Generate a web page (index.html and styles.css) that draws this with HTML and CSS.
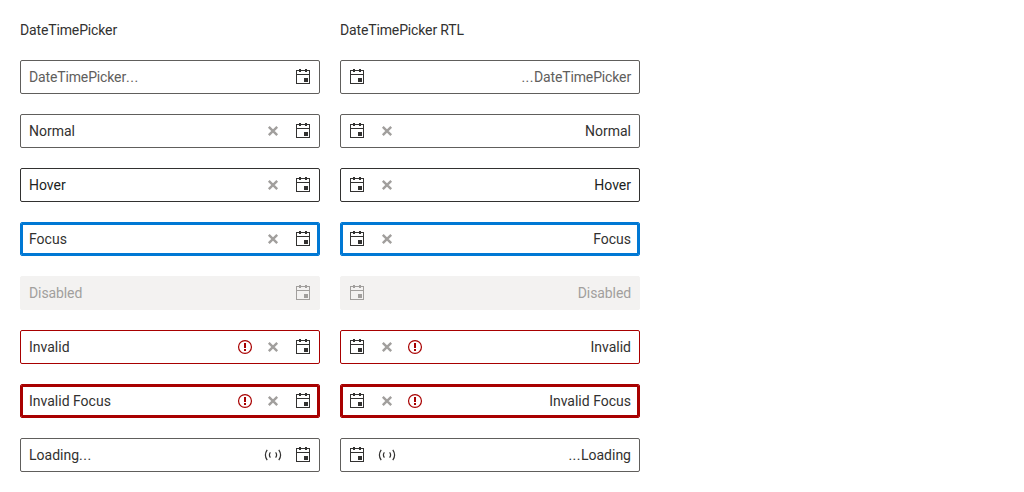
FILE: index.html
```
<!DOCTYPE html>
<html lang="en">
<head>
<meta charset="utf-8">
<title>DateTimePicker</title>
<link rel="stylesheet" href="styles.css">
</head>
<body>
<svg class="sprite" aria-hidden="true">
  <symbol id="calendar" viewBox="0 0 16 16"><path fill="currentColor" fill-rule="evenodd" d="M4 0h2v1h4V0h2v1h3v14H1V1h3zM2 2v3h12V2h-2v1h-2V2H6v1H4V2zM2 6v8h12V6zM9 9h4v4H9z"/></symbol>
  <symbol id="clear" viewBox="0 0 16 16"><path fill="none" stroke="currentColor" stroke-width="2.4" d="M3.8 3.8l8.4 8.4M12.2 3.8l-8.4 8.4"/></symbol>
  <symbol id="error" viewBox="0 0 16 16"><circle cx="8" cy="8" r="6.45" fill="none" stroke="currentColor" stroke-width="1.2"/><path fill="currentColor" d="M7 4h2v5H7zM7 10h2v2H7z"/></symbol>
  <symbol id="loading" viewBox="0 0 18 16"><path fill="none" stroke="currentColor" stroke-width="1.2" d="M3.2 2.8Q-.4 8 3.2 13.2M14.8 2.8q3.6 5.2 0 10.4M6.4 5.4q-2 2.6 0 5.2M11.6 5.4q2 2.6 0 5.2"/></symbol>
</svg>
<main class="columns">
  <section class="column">
    <h2 class="title">DateTimePicker</h2>
    <div class="picker placeholder"><span class="value">DateTimePicker<span class="dots">...</span></span><svg class="icon calendar"><use href="#calendar"/></svg></div>
    <div class="picker"><span class="value">Normal</span><svg class="icon clear"><use href="#clear"/></svg><svg class="icon calendar"><use href="#calendar"/></svg></div>
    <div class="picker hover"><span class="value">Hover</span><svg class="icon clear"><use href="#clear"/></svg><svg class="icon calendar"><use href="#calendar"/></svg></div>
    <div class="picker focus"><span class="value">Focus</span><svg class="icon clear"><use href="#clear"/></svg><svg class="icon calendar"><use href="#calendar"/></svg></div>
    <div class="picker disabled"><span class="value">Disabled</span><svg class="icon calendar"><use href="#calendar"/></svg></div>
    <div class="picker invalid"><span class="value">Invalid</span><svg class="icon error"><use href="#error"/></svg><svg class="icon clear"><use href="#clear"/></svg><svg class="icon calendar"><use href="#calendar"/></svg></div>
    <div class="picker invalid focus"><span class="value">Invalid Focus</span><svg class="icon error"><use href="#error"/></svg><svg class="icon clear"><use href="#clear"/></svg><svg class="icon calendar"><use href="#calendar"/></svg></div>
    <div class="picker"><span class="value">Loading<span class="dots">...</span></span><svg class="icon loading"><use href="#loading"/></svg><svg class="icon calendar"><use href="#calendar"/></svg></div>
  </section>
  <section class="column rtl">
    <h2 class="title">DateTimePicker RTL</h2>
    <div class="picker placeholder"><span class="value"><span class="dots">...</span>DateTimePicker</span><svg class="icon calendar"><use href="#calendar"/></svg></div>
    <div class="picker"><span class="value">Normal</span><svg class="icon clear"><use href="#clear"/></svg><svg class="icon calendar"><use href="#calendar"/></svg></div>
    <div class="picker hover"><span class="value">Hover</span><svg class="icon clear"><use href="#clear"/></svg><svg class="icon calendar"><use href="#calendar"/></svg></div>
    <div class="picker focus"><span class="value">Focus</span><svg class="icon clear"><use href="#clear"/></svg><svg class="icon calendar"><use href="#calendar"/></svg></div>
    <div class="picker disabled"><span class="value">Disabled</span><svg class="icon calendar"><use href="#calendar"/></svg></div>
    <div class="picker invalid"><span class="value">Invalid</span><svg class="icon error"><use href="#error"/></svg><svg class="icon clear"><use href="#clear"/></svg><svg class="icon calendar"><use href="#calendar"/></svg></div>
    <div class="picker invalid focus"><span class="value">Invalid Focus</span><svg class="icon error"><use href="#error"/></svg><svg class="icon clear"><use href="#clear"/></svg><svg class="icon calendar"><use href="#calendar"/></svg></div>
    <div class="picker"><span class="value"><span class="dots">...</span>Loading</span><svg class="icon loading"><use href="#loading"/></svg><svg class="icon calendar"><use href="#calendar"/></svg></div>
  </section>
</main>
</body>
</html>
```
FILE: styles.css
```
* { box-sizing: border-box; }
body {
  margin: 0;
  padding: 20px;
  background: #fff;
  color: #323130;
  font: 14px/20px Roboto, sans-serif;
}
.sprite { display: none; }
.columns { display: flex; gap: 20px; }
.column { display: flex; flex-direction: column; gap: 20px; width: 300px; }
.title { margin: 0; font-size: 14px; font-weight: 400; letter-spacing: -.14px; }
.picker {
  display: flex;
  align-items: center;
  height: 34px;
  padding: 0 8px;
  border: 1px solid #605e5c;
  border-radius: 2px;
}
.rtl .picker { flex-direction: row-reverse; }
.value { flex: 1; }
.rtl .value { text-align: right; }
.dots { letter-spacing: .5px; }
.icon { flex: none; width: 16px; height: 16px; }
.calendar { margin-left: 14px; }
.error { color: #a80000; margin-right: 12px; }
.clear { color: #a19f9d; }
.loading { width: 18px; margin-right: -1px; }
.rtl .calendar { margin: 0 14px 0 0; }
.rtl .error { margin: 0 0 0 12px; }
.rtl .loading { margin: 0 0 0 -1px; }
.placeholder .value { color: #605e5c; letter-spacing: -.14px; }
.hover { border-color: #323130; }
.hover .value { color: #201f1e; }
.focus { border-color: #0078d4; box-shadow: inset 0 0 0 2px #0078d4; }
.disabled { border-color: #f3f2f1; background: #f3f2f1; color: #a19f9d; }
.disabled .value { letter-spacing: -.1px; }
.invalid { border-color: #a80000; }
.invalid.focus { box-shadow: inset 0 0 0 2px #a80000; }
```
